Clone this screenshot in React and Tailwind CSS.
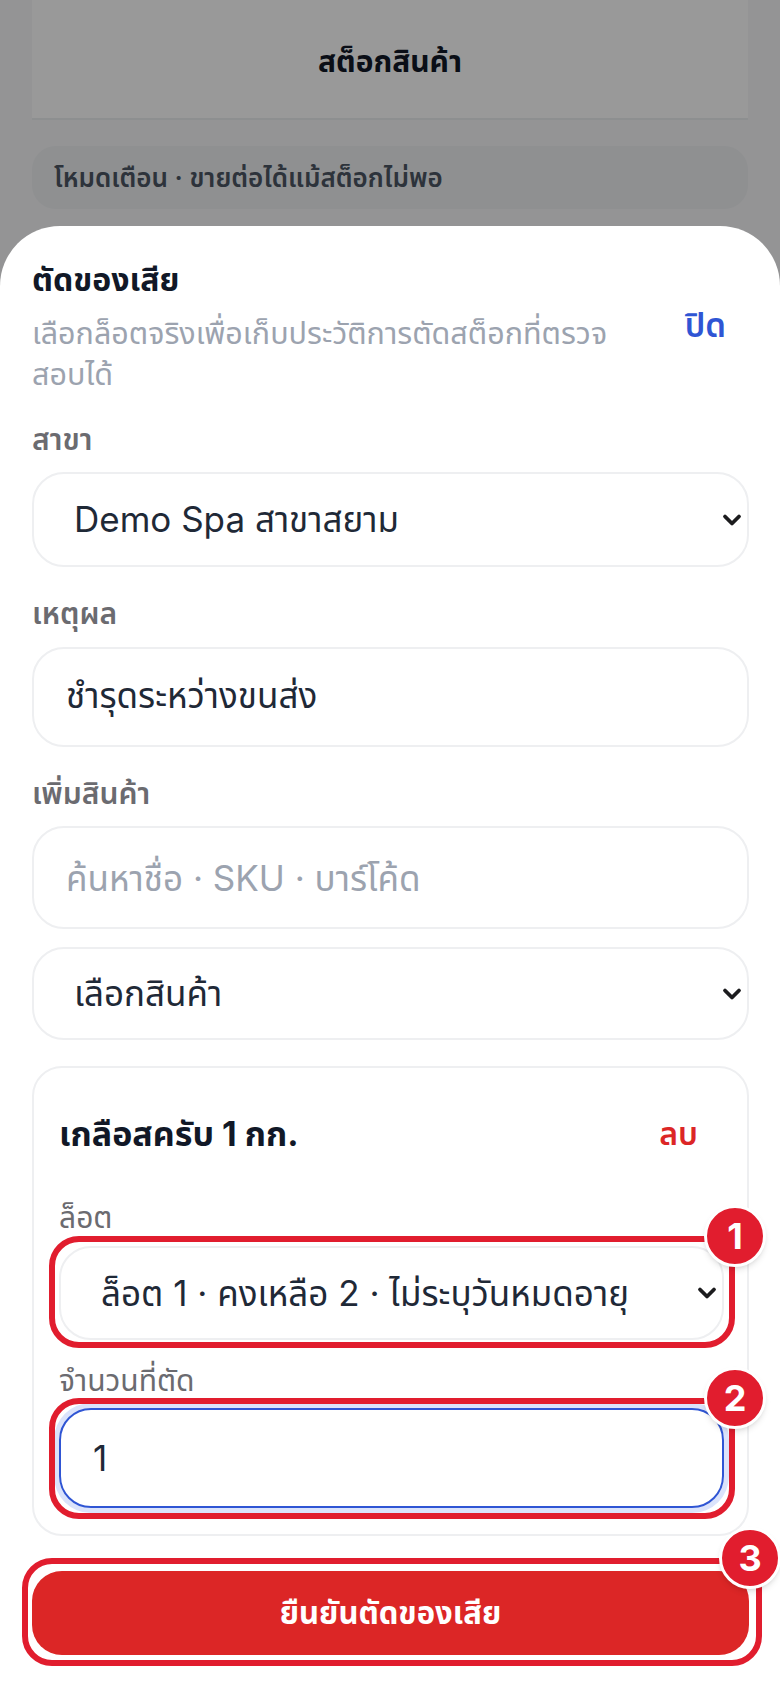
import React from 'react';

function Chevron() {
  return (
    <svg className="absolute right-[7px] top-1/2 -translate-y-1/2 pointer-events-none" width="20" height="20" viewBox="0 0 20 20" fill="none">
      <path d="M3 6.5 L10 13.5 L17 6.5" stroke="#1c1c1e" strokeWidth="3.8" strokeLinecap="round" strokeLinejoin="round" />
    </svg>
  );
}

function Label({ children, className = '' }) {
  return <label className={`block text-[30px] leading-[36px] font-semibold text-[#6b6b70] ${className}`}>{children}</label>;
}

function SelectBox({ value, className = '' }) {
  return (
    <div className={`relative ${className}`}>
      <select
        defaultValue={value}
        className="appearance-none w-full h-full bg-white border-2 border-[#eeeff1] rounded-[32px] pl-[40px] pr-[40px] text-[35px] text-[#1f2937] outline-none"
      >
        <option>{value}</option>
      </select>
      <Chevron />
    </div>
  );
}

function Callout({ n, className = '', badge = '' }) {
  return (
    <div className={`absolute rounded-[30px] border-[6px] border-[#e11d2e] pointer-events-none ${className}`}>
      <span className={`absolute -top-[37px] w-[62px] h-[62px] rounded-full bg-[#e11d2e] border-[3px] border-white shadow-md flex items-center justify-center text-white text-[36px] font-bold ${badge}`}>
        {n}
      </span>
    </div>
  );
}

export default function App() {
  return (
    <div className="relative h-[1688px] w-[780px] overflow-hidden bg-[#f7f7f8] font-['Inter','Noto_Sans_Thai','Noto_Sans',sans-serif]">
      {/* page behind the sheet */}
      <div className="px-8">
        <div className="h-[120px] pt-1 bg-white border-b-2 border-[#eceef0] flex items-center justify-center">
          <h1 className="text-[30px] font-bold text-[#111827]">สต็อกสินค้า</h1>
        </div>
        <div className="mt-[26px] h-[63px] rounded-[24px] bg-[#eef0f2] px-[22px] flex items-center text-[26px] font-semibold text-[#4b5563]">
          โหมดเตือน · ขายต่อได้แม้สต็อกไม่พอ
        </div>
      </div>

      <div className="absolute inset-0 bg-black/40" />

      {/* bottom sheet */}
      <div className="absolute inset-x-0 bottom-0 h-[1462px] bg-white rounded-t-[60px] pl-8 pr-[31px]">
        <div className="flex items-center justify-between pt-[32px]">
          <div className="w-[600px]">
            <h2 className="text-[32px] leading-[44px] font-bold text-[#111827]">ตัดของเสีย</h2>
            <p className="mt-[10px] text-[30.5px] leading-[41px] text-[#9ca3af]">เลือกล็อตจริงเพื่อเก็บประวัติการตัดสต็อกที่ตรวจสอบได้</p>
          </div>
          <button className="mr-[23px] text-[33px] font-semibold text-[#2f55d4]">ปิด</button>
        </div>

        <Label className="mt-[27px]">สาขา</Label>
        <SelectBox value="Demo Spa สาขาสยาม" className="mt-[15px] h-[95px]" />

        <Label className="mt-[28px]">เหตุผล</Label>
        <input
          defaultValue="ชำรุดระหว่างขนส่ง"
          className="mt-[16px] block w-full h-[100px] border-2 border-[#eeeff1] rounded-[32px] px-[32px] text-[35px] text-[#1f2937] outline-none"
        />

        <Label className="mt-[28px]">เพิ่มสินค้า</Label>
        <input
          placeholder="ค้นหาชื่อ · SKU · บาร์โค้ด"
          className="mt-[15px] block w-full h-[103px] border-2 border-[#eeeff1] rounded-[32px] px-[32px] text-[35px] text-[#1f2937] placeholder:text-[#9ca3af] outline-none"
        />
        <SelectBox value="เลือกสินค้า" className="mt-[18px] h-[93px]" />

        <div className="mt-[26px] h-[470px] border-2 border-[#eeeff1] rounded-[30px] pl-[25px] pr-[23px]">
          <div className="flex items-center justify-between pt-[42px]">
            <h3 className="text-[34px] leading-[44px] font-bold text-[#111827]">เกลือสครับ 1 กก.</h3>
            <button className="mr-[26px] text-[32px] font-semibold text-[#dc2626]">ลบ</button>
          </div>
          <div className="mt-[41px] text-[30px] leading-[36px] text-[#6b6b70]">ล็อต</div>
          <SelectBox value="ล็อต 1 · คงเหลือ 2 · ไม่ระบุวันหมดอายุ" className="mt-[11px] h-[94px]" />
          <div className="mt-[22px] text-[30px] leading-[36px] text-[#6b6b70]">จำนวนที่ตัด</div>
          <input
            defaultValue="1"
            className="mt-[10px] block w-full h-[100px] border-2 border-[#2f55d4] rounded-[32px] px-[32px] text-[35px] text-[#1f2937] shadow-[0_0_0_5px_#dbe3fb] outline-none"
          />
        </div>

        <button className="mt-[35px] block w-full h-[84px] rounded-[30px] bg-[#dc2626] text-white text-[31px] font-bold">ยืนยันตัดของเสีย</button>

        <Callout n="1" className="left-[49px] top-[1010px] w-[686px] h-[112px]" badge="-right-[37px]" />
        <Callout n="2" className="left-[49px] top-[1172px] w-[686px] h-[121px]" badge="-right-[37px]" />
        <Callout n="3" className="left-[22px] top-[1332px] w-[740px] h-[108px]" badge="-right-[25px]" />
      </div>
    </div>
  );
}
